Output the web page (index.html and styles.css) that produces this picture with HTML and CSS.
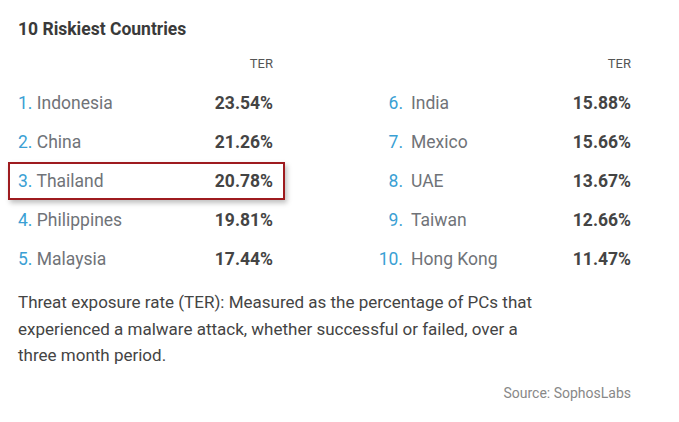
FILE: index.html
```html
<!DOCTYPE html>
<html>
<head>
<meta charset="utf-8">
<link rel="stylesheet" href="styles.css">
</head>
<body>
<div class="card">
  <h2 class="title">10 Riskiest Countries</h2>
  <div class="cols">
    <div class="col col-left">
      <div class="head"><span>TER</span></div>
      <div class="row"><span class="name"><span class="num">1.</span> Indonesia</span><span class="val">23.54%</span></div>
      <div class="row"><span class="name"><span class="num">2.</span> China</span><span class="val">21.26%</span></div>
      <div class="row hl"><span class="name"><span class="num">3.</span> Thailand</span><span class="val">20.78%</span></div>
      <div class="row"><span class="name"><span class="num">4.</span> Philippines</span><span class="val">19.81%</span></div>
      <div class="row"><span class="name"><span class="num">5.</span> Malaysia</span><span class="val">17.44%</span></div>
    </div>
    <div class="col col-right">
      <div class="head"><span>TER</span></div>
      <div class="row"><span class="num rnum">6.</span><span class="name">India</span><span class="val">15.88%</span></div>
      <div class="row"><span class="num rnum">7.</span><span class="name">Mexico</span><span class="val">15.66%</span></div>
      <div class="row"><span class="num rnum">8.</span><span class="name">UAE</span><span class="val">13.67%</span></div>
      <div class="row"><span class="num rnum">9.</span><span class="name">Taiwan</span><span class="val">12.66%</span></div>
      <div class="row"><span class="num rnum">10.</span><span class="name">Hong Kong</span><span class="val">11.47%</span></div>
    </div>
  </div>
  <p class="note">Threat exposure rate (TER): Measured as the percentage of PCs that experienced a malware attack, whether successful or failed, over a three month period.</p>
  <p class="source">Source: SophosLabs</p>
</div>
</body>
</html>
```

FILE: styles.css
```css
html, body {
  margin: 0;
  padding: 0;
  background: #ffffff;
}
body {
  font-family: Roboto, "Liberation Sans", sans-serif;
  color: #444;
}
.card {
  padding: 17px 48px 0 18px;
  width: 613px;
}
.title {
  margin: 0;
  font-size: 17.5px;
  font-weight: 700;
  color: #3a3a3a;
  line-height: 24px;
}
.cols {
  display: grid;
  grid-template-columns: 255px 261px;
  column-gap: 97px;
  margin-top: 13px;
}
.head {
  display: flex;
  justify-content: flex-end;
  font-size: 13px;
  color: #555;
  line-height: 20px;
  margin-bottom: 9px;
}
.row {
  display: flex;
  align-items: center;
  height: 39px;
  font-size: 17.5px;
  position: relative;
}
.name {
  color: #707378;
  flex: 1;
}
.num {
  color: #3a9fd4;
}
.rnum {
  width: 33px;
  text-align: right;
  margin-right: 8px;
  flex: none;
}
.val {
  font-weight: 700;
  color: #444;
  font-size: 17.5px;
}
.hl::before {
  content: "";
  position: absolute;
  left: -10px;
  right: -12px;
  top: 1px;
  bottom: 0px;
  border: 2px solid #9e1b1f;
  box-shadow: 2px 3px 5px rgba(0,0,0,0.25);
}
.note {
  margin: 11px 0 0 0;
  font-size: 17px;
  line-height: 26.5px;
  color: #444;
  width: 535px;
}
.source {
  margin: 16px 0 0 0;
  text-align: right;
  font-size: 14px;
  color: #888;
}
```
